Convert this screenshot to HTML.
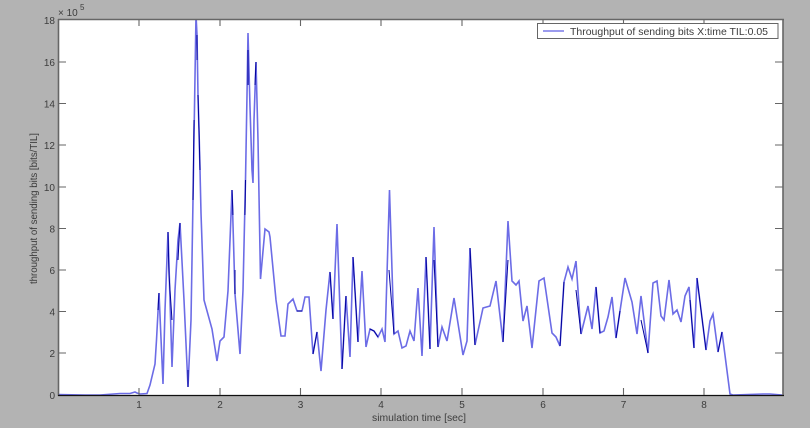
<!DOCTYPE html>
<html><head><meta charset="utf-8">
<style>
html,body{margin:0;padding:0;background:#b3b3b3;width:810px;height:428px;overflow:hidden}
svg{display:block}
text{font-family:"Liberation Sans",sans-serif;fill:#3c3c3c}
</style></head>
<body>
<svg width="810" height="428" viewBox="0 0 810 428" xmlns="http://www.w3.org/2000/svg">
<defs><filter id="b" x="-5%" y="-5%" width="110%" height="110%"><feGaussianBlur stdDeviation="0.3"/></filter></defs>
<rect width="810" height="428" fill="#b3b3b3"/>
<rect x="58.500" y="19.500" width="724.500" height="376" fill="#fff"/>
<clipPath id="c"><rect x="58" y="19" width="726" height="377"/></clipPath>
<g clip-path="url(#c)">
<polyline fill="none" stroke="#6c6ce6" stroke-width="1.6" stroke-linejoin="miter" points="58,394.500 85,395 100,395 120,393.500 130,393.500 135,392 137,393 140,394 147,393.500 150,385 155,364 156.500,340 159,293 163,384 165,310 168,232 172,367 175,290 178,240 180,223 184,300 188,387 191,320 193,200 196,15 197,35 198,95 199,130 200,170 201,213 204,300 212,329 217,361 220,341 224,337 228,291 232,190 235,294 240,354 243,290 245.500,180 247,95 248,33 250,107 252,170 253,183 254,120 256,62 258,140 260.500,279 265,229 269,232 270,237 276,300 281,336 285,336 288,304 293,299 297,311 302,311 305,297 309,297 313,354 317,332 321,371 326,310 330,272 333,319 337,224 342,369 346,296 350,357 353,257 358,342 362,271 366,347 370,329 374,331 378,337 382,329 385,342 389.500,190 394,334 398,331 402,348 406,346 410,331 414,341 418,288 422,356 426,257 430,349 434,227 438,347 442,327 447,341 454,298 463,355 467,341 470,248 475,345 483,308 490,306 496,281 503,342 508,221 512,281 516,285 519,281 523,321 527,306 532,348 539,281 544,278 552,333 556,337 560,346 564,282 568,267 572,279 576,261 581,334 588,306 592,329 596,287 600,333 604,331 608,317 612,297 616,338 620,311 625,278 632,302 637,334 641,296 648,353 653,283 657,281 661,316 664,320 669,280 673,314 677,310 681,322 685,296 689,287 694,348 697,278 706,350 710,321 713,314 718,352 722,332 730,394 733,395 763,394 770,394 782,395"/>
<g fill="none" stroke="#00009a" stroke-width="1">
<polyline points="159,293 158,310"/>
<polyline points="168,232 169,275 172,320"/>
<polyline points="178,260 180,223"/>
<polyline points="188,370 188,387"/>
<polyline points="193,200 194,120"/>
<polyline points="197,35 197,60"/>
<polyline points="198,95 199,130 200,170"/>
<polyline points="232,190 233,215"/>
<polyline points="245.500,180 245,215"/>
<polyline points="248,50 248,85"/>
<polyline points="256,62 255,85"/>
<polyline points="235,270 235,294"/>
<polyline points="317,332 313,354"/>
<polyline points="330,272 333,319"/>
<polyline points="342,369 346,296"/>
<polyline points="353,257 358,342"/>
<polyline points="389,270 394,334"/>
<polyline points="297,311 302,311"/>
<polyline points="370,329 374,331 378,337"/>
<polyline points="426,257 430,349"/>
<polyline points="434,260 438,347"/>
<polyline points="470,248 475,345"/>
<polyline points="503,342 508,260"/>
<polyline points="564,282 560,346"/>
<polyline points="581,334 576,290"/>
<polyline points="596,287 600,333"/>
<polyline points="620,311 616,338"/>
<polyline points="648,353 641,320"/>
<polyline points="694,348 690,300"/>
<polyline points="697,278 706,350"/>
<polyline points="718,352 722,332"/>
</g>
</g>
<g stroke="#666" stroke-width="1.6" fill="none">
<line x1="58" y1="19.500" x2="784" y2="19.500"/>
<line x1="58.500" y1="19" x2="58.500" y2="396"/>
<line x1="783" y1="19" x2="783" y2="396"/>
</g>
<line x1="58" y1="395.500" x2="784" y2="395.500" stroke="#111" stroke-width="1.3"/>
<g stroke="#666" stroke-width="1.1">
<path d="M139 19v7M220 19v7M300.500 19v7M381 19v7M462 19v7M543 19v7M623.500 19v7M704 19v7"/>
<path d="M139 395v-7M220 395v-7M300.500 395v-7M381 395v-7M462 395v-7M543 395v-7M623.500 395v-7M704 395v-7"/>
<path d="M58 19.500h8M58 62h8M58 103.500h8M58 145h8M58 187h8M58 228.500h8M58 270h8M58 311.500h8M58 353h8"/>
<path d="M783 19.500h-8M783 62h-8M783 103.500h-8M783 145h-8M783 187h-8M783 228.500h-8M783 270h-8M783 311.500h-8M783 353h-8"/>
</g>
<rect x="537.500" y="23.500" width="240.500" height="15" fill="#fff" stroke="#666" stroke-width="1"/>
<line x1="543" y1="31" x2="564" y2="31" stroke="#7a7ae8" stroke-width="1.5"/>
<g filter="url(#b)">
<text x="570" y="35" font-size="10.500" textLength="198" lengthAdjust="spacingAndGlyphs">Throughput of sending bits X:time TIL:0.05</text>
<g font-size="10" text-anchor="end">
<text x="55" y="24">18</text><text x="55" y="66">16</text><text x="55" y="107.500">14</text><text x="55" y="149">12</text><text x="55" y="191">10</text>
<text x="55" y="232.500">8</text><text x="55" y="274">6</text><text x="55" y="315.500">4</text><text x="55" y="357">2</text><text x="55" y="399">0</text>
</g>
<g font-size="10" text-anchor="middle">
<text x="139" y="408">1</text><text x="220" y="408">2</text><text x="300.500" y="408">3</text><text x="381" y="408">4</text><text x="462" y="408">5</text><text x="543" y="408">6</text><text x="623.500" y="408">7</text><text x="704" y="408">8</text>
</g>
<text x="58" y="16" font-size="10">× 10</text>
<text x="80" y="10" font-size="8">5</text>
<text x="372" y="421" font-size="10" textLength="94" lengthAdjust="spacingAndGlyphs">simulation time [sec]</text>
<text transform="translate(37 284) rotate(-90)" font-size="10" textLength="151" lengthAdjust="spacingAndGlyphs">throughput of sending bits [bits/TIL]</text>
</g>
</svg>
</body></html>
